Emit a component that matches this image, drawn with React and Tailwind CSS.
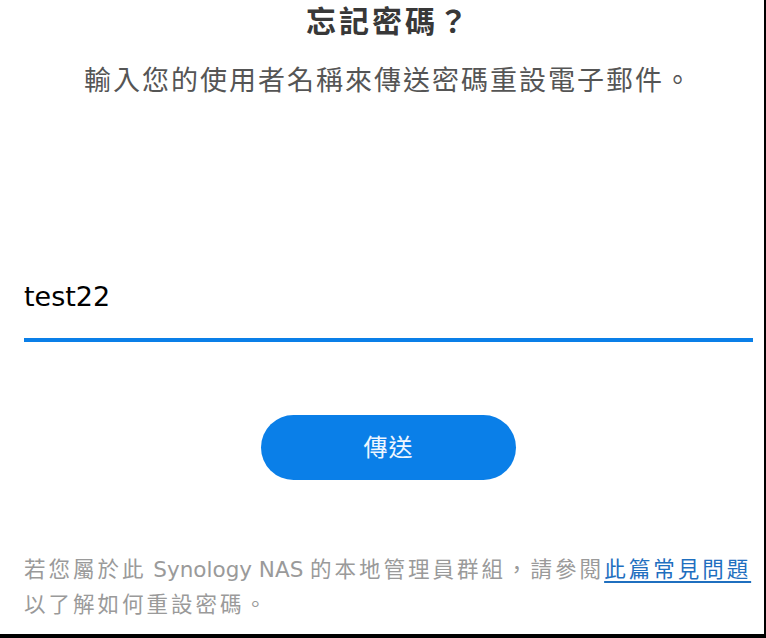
import { useState } from 'react';

function App() {
    const [username, setUsername] = useState('test22');

    const fontClasses = "font-['DejaVu_Sans','Noto_Sans_CJK_TC',sans-serif]";

    return (
        <div className={`w-[766px] h-[638px] bg-white border-r-2 border-b-4 border-black overflow-hidden ${fontClasses}`}>
            <div className="pl-6 pr-[11px] flex flex-col">
                <h1 className="text-center text-[30px] leading-[44px] tracking-[3px] font-semibold text-[#383838]">
                    忘記密碼？
                </h1>
                <p className="mt-[19px] text-center text-[27px] leading-[36px] tracking-[2px] text-[#555555]">
                    輸入您的使用者名稱來傳送密碼重設電子郵件。
                </p>

                <div className="mt-[178px]">
                    <input
                        type="text"
                        value={username}
                        onChange={(e) => setUsername(e.target.value)}
                        className="w-full h-[40px] text-[27px] leading-[40px] text-black bg-transparent outline-none border-b-4 border-[#0a7fe8] box-content"
                        style={{ paddingBottom: 21 }}
                    />
                </div>

                <div className="mt-[73px] flex justify-center">
                    <button
                        type="button"
                        className="w-[255px] h-[65px] rounded-full bg-[#0a7fe8] text-[#eef6ff] text-[24px] tracking-[1px]"
                    >
                        傳送
                    </button>
                </div>

                <p className="mt-[72px] text-[21.5px] leading-[35px] tracking-[3px] text-[#9a9a9a] whitespace-nowrap">
                    若您屬於此<span className="tracking-normal"> Synology NAS </span>的本地管理員群組，請參閱
                    <a href="#" className="text-[#1f6fbf] underline underline-offset-4">
                        此篇常見問題
                    </a>
                    <br />
                    以了解如何重設密碼。
                </p>
            </div>
        </div>
    );
}

export default App;
